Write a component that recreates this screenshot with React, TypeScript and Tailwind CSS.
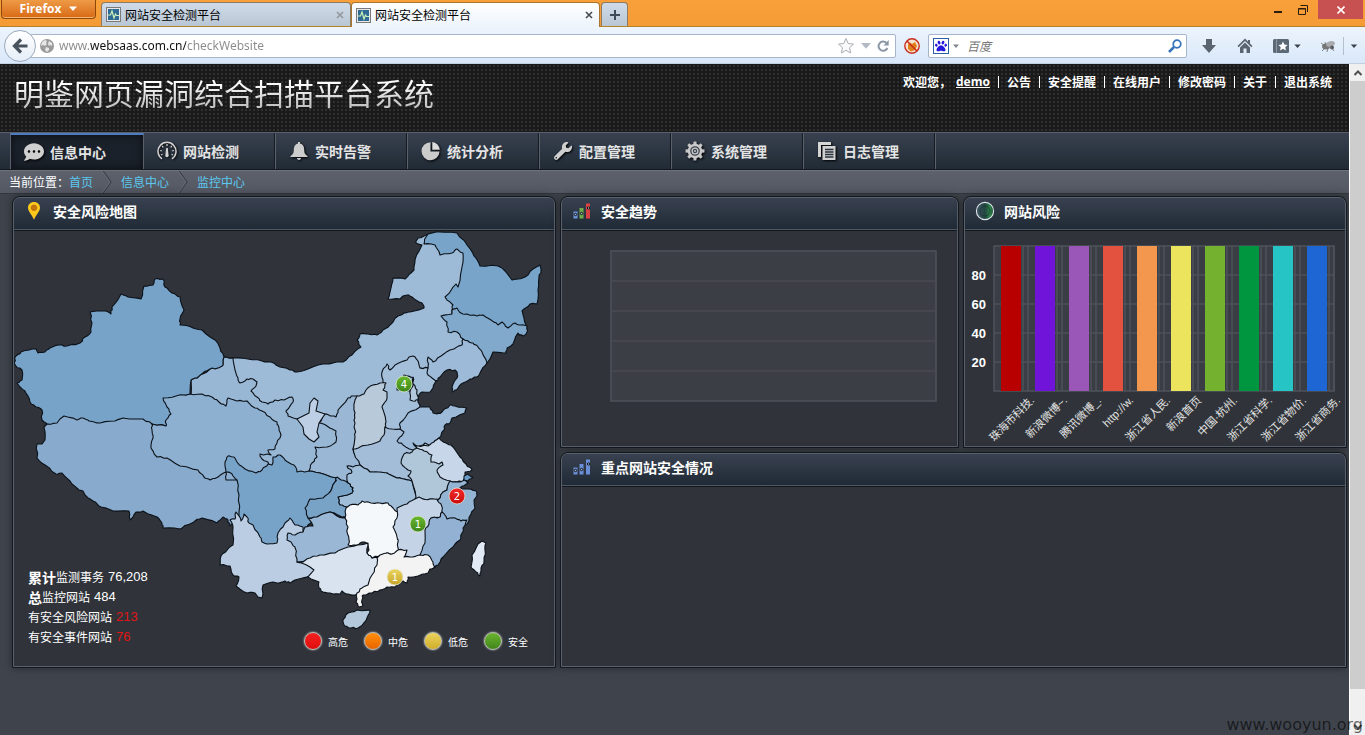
import type { ReactNode } from "react";
import { FaCommentDots, FaWrench, FaPaw, FaHome } from "react-icons/fa";

type Point = [number, number];
type Province = { name: string; fill: string; outline: string };

/* Later provinces are painted over earlier ones, so each shared border is set by the later shape. */
const provinces: Province[] = [
  { name: "内蒙古", fill: "#9dbbd7", outline: "224,357 233,358 248,359 262,361 271,362 280,367 290,370 297,372 308,369 323,364 343,362 352,355 361,347 357,340 360,334 368,334 377,335 383,330 390,325 398,316 404,313 410,312 424,308 422,303 412,297 407,295 403,296 400,299 388,299 391,288 393,278 405,279 411,273 414,270 415,260 422,245 416,243 418,238 426,235 440,240 463,250 470,270 470,300 470,345 450,352 440,365 430,380 400,380 387,400 366,400 345,418 330,430 300,430 285,418 262,408 240,400" },
  { name: "甘肃", fill: "#98b7d4", outline: "224,357 233,358 235,370 238,378 240,383 247,379 253,379 257,382 256,386 251,391 257,397 262,402 268,404 275,400 284,400 292,397 293,402 286,411 288,416 297,419 320,420 340,428 340,450 325,475 290,480 262,476 250,440 190,405 191,380 197,378 210,369 223,365" },
  { name: "新疆", fill: "#78a3c8", outline: "14,363 16,356 21,352 32,349 36,349 38,353 45,352 50,348 59,345 67,346 80,343 85,337 91,332 92,323 90,312 105,311 111,314 112,307 121,294 128,297 141,299 144,286 153,285 155,279 163,279 165,287 172,293 180,297 184,310 180,319 180,325 191,327 202,330 215,340 220,348 224,357 223,365 218,368 210,369 203,373 197,378 191,380 190,394 180,405 171,430 47,432 47,424 42,420 42,410 36,407 30,402 26,393 20,387 17,383 22,380 22,370 16,366" },
  { name: "西藏", fill: "#88abcd", outline: "47,424 57,423 60,419 64,416 77,420 83,418 89,421 100,423 115,421 123,418 143,419 152,424 166,426 210,455 232,466 240,480 241,512 230,526 228,520 223,517 217,523 202,518 195,521 187,525 180,529 163,528 162,523 157,517 143,511 136,512 130,520 129,511 113,511 101,507 93,501 85,495 83,491 78,489 70,481 62,473 56,474 45,465 37,458 37,444 42,444 45,440 44,427" },
  { name: "青海", fill: "#8dafd0", outline: "163,398 176,396 190,394 202,394 212,397 219,402 226,406 228,398 237,401 247,401 255,408 262,411 270,417 277,422 279,428 281,435 277,443 275,449 268,450 271,455 260,454 262,459 268,462 269,465 275,478 226,480 226,472 218,477 210,480 204,477 198,470 180,466 167,458 157,457 151,448 153,438 152,430 152,424 166,426 166,420 171,414 167,407" },
  { name: "黑龙江", fill: "#78a4c9", outline: "426,237 428,234 440,232 457,233 467,245 474,256 480,266 498,266 505,271 512,280 525,277 533,269 540,265 541,270 539,277 538,290 537,304 530,304 522,311 524,318 526,325 520,335 460,325 452,314 452,310 453,305 445,297 456,284 458,287 462,267 463,253 457,249 452,253 440,255 435,245 424,244" },
  { name: "吉林", fill: "#80a9cb", outline: "452,314 452,310 457,308 461,313 467,314 477,316 483,315 491,320 498,325 502,322 508,328 515,323 521,325 527,326 527,332 523,336 518,333 513,344 507,348 506,353 493,352 487,363 480,368 463,345 463,339 457,332 448,332 447,322 441,316" },
  { name: "辽宁", fill: "#9dbad8", outline: "463,339 468,341 473,343 478,347 482,352 487,363 481,371 477,377 470,379 463,383 458,388 453,392 452,387 457,378 457,372 455,370 447,370 440,377 436,381 420,378 420,368 428,368 428,357 433,362 441,356 450,350 462,345" },
  { name: "河北", fill: "#a4bfda", outline: "387,364 390,370 395,365 407,360 409,357 413,356 418,361 420,368 428,368 427,373 432,378 436,381 433,388 430,392 422,392 418,397 418,402 420,407 420,420 400,435 385,435 380,410 383,380 382,372" },
  { name: "陕西", fill: "#9ab8d5", outline: "357,396 353,396 348,398 338,410 336,417 331,416 325,414 319,423 327,426 336,431 336,442 327,447 315,447 317,457 312,463 309,471 320,473 337,478 348,483 370,480 370,400" },
  { name: "山西", fill: "#b8c9d9", outline: "380,383 373,385 366,390 364,394 357,396 355,400 354,407 355,413 354,420 355,430 355,437 353,449 354,453 384,453 385,427 386,422 382,407 385,402 387,397 387,392 383,390 386,383" },
  { name: "天津", fill: "#b2c8dd", outline: "413,377 413,384 417,390 418,400 413,401 410,400 410,390" },
  { name: "北京", fill: "#96b6d4", outline: "404,375 413,378 413,385 410,391 397,390 399,381" },
  { name: "河南", fill: "#a3bdd8", outline: "353,449 360,447 368,445 380,441 384,435 385,427 392,429 405,430 415,440 425,460 418,481 412,481 404,479 397,478 387,473 378,473 370,472 360,465 354,453" },
  { name: "山东", fill: "#9dbbd8", outline: "420,407 430,407 433,413 437,414 442,412 450,405 455,406 467,408 465,413 452,418 450,423 445,425 444,430 439,438 434,442 433,447 413,450 403,445 397,441 404,432 400,429 400,423 408,413" },
  { name: "湖北", fill: "#a0bed8", outline: "347,466 353,467 360,465 370,472 387,473 397,478 404,479 412,481 418,500 397,515 347,515 340,505 338,497 352,493 353,488 348,483 347,475 352,472" },
  { name: "安徽", fill: "#b0c6d9", outline: "417,448 425,443 450,455 455,482 450,482 447,490 443,492 438,500 430,499 423,499 415,499 416,497 412,481 408,476 411,471 408,470 401,463 404,454 412,452" },
  { name: "江苏", fill: "#c7d6e8", outline: "413,443 418,446 428,446 434,442 439,438 446,443 453,447 460,457 466,464 472,470 465,472 465,476 464,481 457,482 450,481 440,477 437,470 443,465 442,462 439,464 431,462 432,455 424,451 417,448 414,445" },
  { name: "浙江", fill: "#94b4d3", outline: "450,481 457,482 465,480 468,483 465,485 460,488 468,489 476,491 477,496 474,500 475,508 471,514 467,524 440,525 435,505 438,500 443,492 447,490" },
  { name: "上海", fill: "#6c9dc7", outline: "464,476 468,474 473,477 468,481 464,480" },
  { name: "四川", fill: "#78a3c8", outline: "226,472 225,462 228,456 234,457 237,462 245,469 256,473 262,470 268,464 272,465 273,457 280,455 285,460 294,465 297,472 309,471 320,473 337,478 335,482 330,492 325,510 308,525 303,535 278,550 240,535 239,512 239,495 237,480 232,474" },
  { name: "重庆", fill: "#79a3c6", outline: "337,477 341,480 348,483 353,488 352,493 338,497 340,505 347,507 346,518 340,516 330,512 317,517 308,518 305,508 310,499 323,498 330,492 335,482" },
  { name: "云南", fill: "#bacde3", outline: "230,520 235,519 236,512 239,516 241,521 244,514 247,517 249,523 253,525 260,537 262,542 267,544 277,543 278,533 285,523 290,518 295,525 303,527 303,532 310,560 320,572 313,575 295,580 290,583 285,581 277,583 273,582 263,585 262,598 258,597 255,593 247,593 236,586 239,577 233,575 230,566 220,565 221,556 228,549 233,545 233,527" },
  { name: "贵州", fill: "#9ab8d6", outline: "317,517 330,512 333,513 337,516 346,518 350,527 350,547 320,562 297,562 296,553 295,547 291,542 287,540 288,533 295,535 303,532 305,527 313,526 308,518" },
  { name: "广西", fill: "#d8e3ef", outline: "297,562 303,562 310,558 320,555 335,553 348,547 357,545 368,543 367,553 372,558 380,558 380,575 366,593 355,595 348,594 342,591 340,594 330,593 323,592 319,588 319,582 308,577 314,570 310,567" },
  { name: "湖南", fill: "#f4f8fb", outline: "346,508 350,505 358,505 362,501 371,503 380,503 388,503 393,508 398,512 405,535 400,555 387,553 382,555 372,558 367,553 369,550 368,543 362,542 357,545 348,545 349,540 347,532 348,527 345,518" },
  { name: "江西", fill: "#c4d3e5", outline: "397,508 407,504 415,499 419,497 423,499 430,499 437,499 441,504 442,510 440,518 431,518 440,530 430,560 404,560 398,548 398,542 397,537 393,527 397,518" },
  { name: "福建", fill: "#93b2d3", outline: "442,512 447,519 455,518 461,521 467,520 463,528 462,533 460,540 453,547 443,557 438,565 433,568 420,557 420,555 425,543 425,530 429,524 431,518 440,517" },
  { name: "广东", fill: "#f3f3f3", outline: "377,558 380,555 387,553 392,554 398,550 407,550 404,557 413,557 420,555 428,555 433,562 435,567 430,569 428,573 418,576 408,577 407,583 402,581 395,587 387,587 380,590 372,593 363,595 362,600 363,606 359,607 356,602 357,593 362,588 368,585 372,575 377,565" },
  { name: "海南", fill: "#b3c8da", outline: "348,613 357,610 370,610 367,618 363,624 358,628 351,628 345,626 343,620" },
  { name: "台湾", fill: "#e1e9f5", outline: "478,544 482,541 486,543 485,550 484,562 481,568 480,576 476,572 471,567 472,555" },
];

/* Breaks each long edge in three; the shift depends only on the place, so neighbours agree. */
function coast(outline: string): string {
  const pts = outline.split(" ").map((p) => p.split(",").map(Number) as Point);
  const out: string[] = [];
  pts.forEach(([x, y], i) => {
    const [nx, ny] = pts[(i + 1) % pts.length];
    out.push(`${x},${y}`);
    if (Math.hypot(nx - x, ny - y) > 5) {
      for (const t of [1, 2]) {
        const mx = x + ((nx - x) * t) / 3;
        const my = y + ((ny - y) * t) / 3;
        const h = Math.sin(Math.round(mx * 7) * 12.9 + Math.round(my * 7) * 78.2) * 437.5;
        const a = (h - Math.floor(h)) * Math.PI * 2;
        out.push(`${(mx + Math.cos(a) * 0.7).toFixed(1)},${(my + Math.sin(a) * 0.7).toFixed(1)}`);
      }
    }
  });
  return out.join(" ");
}

const markers = [
  { x: 404, y: 384, n: 4, fill: "url(#safe)" },
  { x: 457, y: 496, n: 2, fill: "url(#high)" },
  { x: 418, y: 524, n: 1, fill: "url(#safe)" },
  { x: 395, y: 577, n: 1, fill: "url(#low)" },
];

const legend = [
  { label: "高危", tone: "bg-linear-to-b from-[#f52020] to-[#e00d0d]" },
  { label: "中危", tone: "bg-linear-to-b from-[#ff8f0a] to-[#e86400]" },
  { label: "低危", tone: "bg-linear-to-b from-[#ecd35a] to-[#cfae28]" },
  { label: "安全", tone: "bg-linear-to-b from-[#6cb52f] to-[#3f861b]" },
];

const bars = [
  { label: "珠海市科技.", end: 1035, fill: "#b90000" },
  { label: "新浪微博~.", end: 1068, fill: "#7114d9" },
  { label: "腾讯微博_.", end: 1102, fill: "#9a57b8" },
  { label: "http://w.", end: 1134, fill: "#e3523f" },
  { label: "浙江省人民.", end: 1171, fill: "#f3974f" },
  { label: "新浪首页", end: 1202, fill: "#ece45c" },
  { label: "中国·杭州.", end: 1238, fill: "#73b12f" },
  { label: "浙江省科学.", end: 1273, fill: "#009640" },
  { label: "浙江省物价.", end: 1307, fill: "#27c4c5" },
  { label: "浙江省商务.", end: 1341, fill: "#1e66d3" },
];

function Caret({ className }: { className: string }) {
  return (
    <svg viewBox="0 0 8 5" className={className} aria-hidden="true">
      <path d="M0 .5h8L4 5z" fill="currentColor" />
    </svg>
  );
}

function PulseIcon() {
  return (
    <svg viewBox="0 0 15 15" className="size-[15px] shrink-0" aria-hidden="true">
      <rect x=".5" y=".5" width="14" height="14" fill="#e8e8e8" stroke="#7a7a7a" />
      <rect x="2" y="2" width="11" height="11" fill="#2e6a93" />
      <path d="M2 8h2.500l1.500-4 2 7 1.500-4 1 1.500H13" fill="none" stroke="#c8f0b8" strokeWidth="1.200" />
    </svg>
  );
}

function BrowserTab({ active }: { active?: boolean }) {
  return (
    <div
      className={
        active
          ? "relative z-10 -mb-px flex h-[25px] w-[249px] items-center rounded-t-sm border-x border-t border-[#a9762f] bg-linear-to-b from-white to-[#edf4fc] px-1"
          : "flex h-6 w-[250px] items-center rounded-t-sm border-x border-t border-[#8c7a62] bg-linear-to-b from-[#cfdbe8] to-[#b9c6d4] px-1"
      }
    >
      <PulseIcon />
      <span className="ml-1 flex-1 text-black">网站安全检测平台</span>
      <button aria-label="关闭标签页" className={active ? "mr-0.5 text-[#4b4f55]" : "mr-0.5 text-[#93989f]"}>
        <svg viewBox="0 0 8 8" className="size-2" aria-hidden="true">
          <path d="M1 1l6 6M7 1L1 7" stroke="currentColor" strokeWidth="1.700" />
        </svg>
      </button>
    </div>
  );
}

function BrowserChrome() {
  return (
    <div className="shrink-0 text-xs">
      <div className="flex h-[26px] items-end bg-linear-to-b from-[#f9a03a] to-[#f49b35] pl-px">
        <button className="mr-[5px] flex h-[19px] w-[95px] items-center justify-center gap-2 self-start rounded-b-sm border border-t-0 border-[#8f4709] bg-linear-to-b from-[#ee9a45] to-[#d8690f] pb-px font-['Open_Sans',sans-serif] font-bold text-white shadow-[inset_0_-1px_0_#f3b878]">
          Firefox
          <Caret className="h-[5px] w-2" />
        </button>
        <BrowserTab />
        <BrowserTab active />
        <button aria-label="新建标签页" className="ml-px flex h-6 w-[27px] items-center justify-center rounded-t-sm border-x border-t border-[#8c7a62] bg-linear-to-b from-[#cfdbe8] to-[#b9c6d4]">
          <svg viewBox="0 0 10 10" className="size-2.5" aria-hidden="true">
            <path d="M5 0v10M0 5h10" stroke="#3c4a59" strokeWidth="2" />
          </svg>
        </button>
        <div className="ml-auto flex h-[19px] items-center self-start pr-0.5">
          <button aria-label="最小化" className="flex h-full w-6 items-end justify-center pb-1.5">
            <span className="h-0.5 w-2 bg-[#2b1c0b]" />
          </button>
          <button aria-label="还原" className="mr-0.5 flex w-[26px] justify-center">
            <svg viewBox="0 0 10 10" className="size-2.5" aria-hidden="true">
              <path d="M.5 3.500h7v6h-7zM.5 4h7M2.500 .5h7v6.500" fill="none" stroke="#2b1c0b" />
            </svg>
          </button>
          <button aria-label="关闭" className="flex h-full w-[45px] items-center justify-center bg-[#c75050]">
            <svg viewBox="0 0 8 8" className="size-2" aria-hidden="true">
              <path d="M.5 .5l7 7M7.500 .5l-7 7" stroke="#fff" strokeWidth="1.600" />
            </svg>
          </button>
        </div>
      </div>

      <div className="flex h-[38px] items-center border-t border-b border-t-[#b4812f] border-b-[#c2cfdf] bg-linear-to-b from-[#edf4fc] to-[#d9e8fa] pt-px pr-[7px] pl-1">
        <button aria-label="后退" className="z-10 flex size-8 shrink-0 items-center justify-center rounded-full border border-[#9aa9bb] bg-linear-to-b from-white to-[#e6eef8]">
          <svg viewBox="0 0 16 16" className="size-4" aria-hidden="true">
            <path d="M9 1.500L2.500 8 9 14.500M3 8h12.500" fill="none" stroke="#48525f" strokeWidth="3.200" />
          </svg>
        </button>
        <div className="-ml-1.5 flex h-6 flex-1 items-center rounded-xs border border-[#a6b5cb] bg-white pr-1.5 pl-[9px]">
          <svg viewBox="0 0 14 14" className="size-3.5 shrink-0" aria-hidden="true">
            <circle cx="7" cy="7" r="7" fill="#9a9a9a" />
            <path d="M2 3l3-2 2 1-1 2 1 1-2 2-2-1-2 1zM9 2l3 2v3l-2-1-1 1-1-2zM6 8l3 1v2l-2 2-2-2z" fill="#e6e6e6" />
          </svg>
          <input
            aria-label="地址栏"
            defaultValue="www.websaas.com.cn/checkWebsite"
            className="ml-[5px] min-w-0 flex-1 bg-[linear-gradient(90deg,#8a8a8a_31px,#111_31px,#111_127px,#8a8a8a_127px)] bg-clip-text font-['Noto_Sans',sans-serif] text-xs text-transparent caret-black outline-none"
          />
          <button aria-label="收藏" className="mr-1.5">
            <svg viewBox="0 0 18 18" className="size-[18px]" aria-hidden="true">
              <path d="M9 1.500l2.200 5 5.300.6-4 3.600 1.200 5.300L9 13.300 4.300 16l1.200-5.300-4-3.600 5.300-.6z" fill="#fafafa" stroke="#a9adb3" />
            </svg>
          </button>
          <button aria-label="历史记录" className="mr-1.5 text-[#b3bac5]">
            <Caret className="h-[7px] w-2.5" />
          </button>
          <button aria-label="重新载入">
            <svg viewBox="0 0 12 12" className="size-3" aria-hidden="true">
              <path d="M9.500 3A4.600 4.600 0 1 0 10.400 8" fill="none" stroke="#8c97a5" strokeWidth="2" />
              <path d="M11.700 0v5.500H6.500z" fill="#8c97a5" />
            </svg>
          </button>
        </div>
        <button aria-label="拦截" className="mx-2">
          <svg viewBox="0 0 16 16" className="size-4" aria-hidden="true">
            <circle cx="8" cy="8" r="7.200" fill="#f6e2cf" stroke="#c92c1e" strokeWidth="1.400" />
            <path d="M4 6.500l2-2 2 1.500 3-2 2 4-2 4-4 1.500L4 11z" fill="#df7f17" />
            <path d="M3 3l10 10" stroke="#c92c1e" strokeWidth="1.500" />
          </svg>
        </button>
        <div className="flex h-6 w-[259px] items-center rounded-xs border border-[#a6b5cb] bg-white pr-1 pl-1">
          <span className="flex size-4 items-center justify-center border border-[#2b5fa8] bg-white text-[#2319dc]">
            <FaPaw className="size-3" />
          </span>
          <button aria-label="搜索引擎" className="ml-1 text-[#80858d]">
            <Caret className="h-1 w-1.5" />
          </button>
          <input aria-label="搜索" placeholder="百度" className="ml-2 min-w-0 flex-1 italic outline-none placeholder:text-[#777]" />
          <button aria-label="开始搜索">
            <svg viewBox="0 0 14 14" className="size-3.5" aria-hidden="true">
              <circle cx="9" cy="5" r="3.800" fill="none" stroke="#3572b8" strokeWidth="1.700" />
              <path d="M6 8L1 13" stroke="#3572b8" strokeWidth="2.500" />
            </svg>
          </button>
        </div>
        <button aria-label="下载" className="ml-3.5">
          <svg viewBox="0 0 16 16" className="size-4" aria-hidden="true">
            <path d="M5 1h6v6h4l-7 8-7-8h4z" fill="#5a6470" />
          </svg>
        </button>
        <button aria-label="主页" className="ml-5 text-[#5a6470]">
          <svg viewBox="0 0 16 16" className="size-4" aria-hidden="true">
            <path d="M8 .5L.5 8l1.200 1.200L8 3l6.300 6.200L15.500 8 13 5.500V2h-2v1.500z" fill="currentColor" />
            <path d="M8 4.500L3 9.500V15h3.500v-4.500h3V15H13V9.500z" fill="currentColor" />
          </svg>
        </button>
        <button aria-label="书签" className="ml-5 flex items-center gap-[5px] text-[#3b434d]">
          <svg viewBox="0 0 16 14" className="h-3.5 w-4" aria-hidden="true">
            <rect width="16" height="14" rx="1.500" fill="#5d6875" />
            <path d="M3.500 0v14" stroke="#8d97a3" />
            <path d="M10 2.500l1.400 3 3.200.4-2.300 2.200.6 3.300-2.900-1.600-2.900 1.600.6-3.300-2.300-2.200 3.200-.4z" fill="#fff" />
          </svg>
          <Caret className="h-1 w-[7px]" />
        </button>
        <button aria-label="附加组件" className="ml-[19px]">
          <svg viewBox="0 0 16 14" className="h-3.5 w-4" aria-hidden="true">
            <ellipse cx="6" cy="7.500" rx="4" ry="3" fill="#77787a" />
            <ellipse cx="10.500" cy="5" rx="4.500" ry="2.600" fill="#a9abae" transform="rotate(-15 10 5)" />
            <circle cx="12" cy="8.500" r="2" fill="#55575a" />
            <path d="M1 4l4 3M2 12l3-3M7 13l1-4M14 12l-3-4M5 3l1 3" stroke="#6b6c6e" strokeWidth=".8" />
          </svg>
        </button>
        <span className="ml-[7px] h-[18px] w-px bg-[#b2bfce]" />
        <button aria-label="更多" className="ml-1.5 text-[#3b434d]">
          <Caret className="h-1 w-2" />
        </button>
      </div>
    </div>
  );
}

function GaugeIcon() {
  return (
    <svg viewBox="0 0 20 20" className="size-5" aria-hidden="true">
      <path d="M5 17.800A9 9 0 1 1 15 17.800" fill="none" stroke="#d2d2d2" strokeWidth="1.500" />
      <path d="M10 3v2M5.200 5l1.100 1.300M14.800 5l-1.100 1.300M3.200 9.500l1.600.4M16.800 9.500l-1.600.4M4 14l1.500-.7M16 14l-1.500-.7" stroke="#d2d2d2" strokeWidth="1.200" />
      <path d="M9.200 7h1.600l.9 7.500a1.700 1.700 0 1 1-3.400 0z" fill="#d2d2d2" />
    </svg>
  );
}

function BellIcon() {
  return (
    <svg viewBox="0 0 20 20" className="size-5" aria-hidden="true">
      <path d="M9 1h2v1.500c3 .7 4.200 3 4.200 6 0 4 1 5 3.300 6.500V16H1.500v-1C3.800 13.500 4.800 12.500 4.800 8.500c0-3 1.200-5.300 4.200-6zM8 17h4c-.2 1.300-1 2-2 2s-1.800-.7-2-2z" fill="#cdcdcd" />
    </svg>
  );
}

function PieIcon() {
  return (
    <svg viewBox="0 0 20 20" className="size-5" aria-hidden="true">
      <path d="M9.500 1.200A9 9 0 1 0 18.500 10.500H9.500z" fill="#cbcbcb" />
      <path d="M11.300 1a8.500 8.500 0 0 1 7.500 7.700h-7.500z" fill="#dcdcdc" />
    </svg>
  );
}

function GearIcon() {
  return (
    <svg viewBox="0 0 20 20" className="size-5" aria-hidden="true">
      <g fill="#c6c6c6">
        {[0, 45, 90, 135].map((a) => (
          <path key={a} d="M8.600 .5h2.800l1 9.500-1 9.500H8.600l-1-9.500z" transform={`rotate(${a} 10 10)`} />
        ))}
      </g>
      <circle cx="10" cy="10" r="7.300" fill="#c9c9c9" />
      <circle cx="10" cy="10" r="4.200" fill="none" stroke="#3b4450" strokeWidth="1.300" />
      <circle cx="10" cy="10" r="1.600" fill="#c9c9c9" stroke="#3b4450" strokeWidth="1.200" />
    </svg>
  );
}

function PagesIcon() {
  return (
    <svg viewBox="0 0 20 20" className="size-5" aria-hidden="true">
      <path d="M1 1h13v3H4v12H1z" fill="#d5d5d5" />
      <path d="M5.500 5h13v14h-13z" fill="#d0d0d0" />
      <path d="M8 8.500h8.500M8 11h8.500M8 13.500h8.500M8 16h8.500" stroke="#27303a" strokeWidth="1.300" />
    </svg>
  );
}

const navItems: { label: string; icon: ReactNode }[] = [
  { label: "信息中心", icon: <FaCommentDots className="size-5" /> },
  { label: "网站检测", icon: <GaugeIcon /> },
  { label: "实时告警", icon: <BellIcon /> },
  { label: "统计分析", icon: <PieIcon /> },
  { label: "配置管理", icon: <FaWrench className="size-[18px] -scale-x-100 rotate-90" /> },
  { label: "系统管理", icon: <GearIcon /> },
  { label: "日志管理", icon: <PagesIcon /> },
];

const userLinks = ["公告", "安全提醒", "在线用户", "修改密码", "关于", "退出系统"];

function SiteHeader() {
  return (
    <header>
      <div className="flex h-[68px] items-start justify-between bg-[#1a1a1a] bg-[radial-gradient(#303030_1px,transparent_1px)] bg-[size:4px_4px] pr-[17px] pl-3.5">
        <h1 className="mt-1.5 bg-linear-to-b from-white from-30% to-[#c4c4c4] to-80% bg-clip-text text-[30px] leading-[44px] text-transparent">
          明鉴网页漏洞综合扫描平台系统
        </h1>
        <div className="mt-2.5 flex items-center text-xs font-bold text-white">
          <span>欢迎您，</span>
          <a href="#demo" className="mr-2 ml-[5px] font-['Open_Sans',sans-serif] underline">demo</a>
          {userLinks.map((t) => (
            <span key={t} className="flex items-center">
              <span className="h-3 w-px bg-white" />
              <a href={`#${t}`} className={t === "退出系统" ? "pl-2" : "px-2"}>{t}</a>
            </span>
          ))}
        </div>
      </div>
      <nav className="flex h-[38px] border-t border-b border-t-[#5a606b] border-b-[#14181d] bg-linear-to-b from-[#394150] to-[#202b35] pl-2.5">
        {navItems.map((item, i) => (
          <a
            key={item.label}
            href={`#${item.label}`}
            className={
              i === 0
                ? "flex w-[134px] items-center gap-1.5 border-x border-t-2 border-x-[#5a616d] border-t-[#4f7cc0] bg-[#1b212b] pl-[13px] text-sm font-bold text-[#e4e4e4] shadow-[inset_0_0_8px_#0b0e13]"
                : "flex w-[132px] items-center gap-1.5 border-r border-[#5a616d] pl-[13px] text-sm font-bold text-[#e4e4e4] shadow-[inset_-1px_0_0_#171c23]"
            }
          >
            <span className="flex w-5 justify-center text-[#cfcfcf] drop-shadow-[1px_1px_1px_#000]">{item.icon}</span>
            <span>{item.label}</span>
          </a>
        ))}
      </nav>
      <div className="flex h-6 items-center border-t border-b border-t-[#6e727c] border-b-[#33383f] bg-linear-to-b from-[#5c616c] to-[#545863] pl-[9px] text-xs text-[#5cc8ef]">
        <span className="text-white">当前位置：</span>
        {["首页", "信息中心", "监控中心"].map((t, i) => (
          <span key={t} className="flex items-center">
            {i > 0 && (
              <svg viewBox="0 0 10 22" className="mx-[9px] h-[22px] w-2.5" aria-hidden="true">
                <path d="M1 0l8 11-8 11" fill="none" stroke="#383c45" strokeWidth="1.200" />
                <path d="M0 0l8 11-8 11" fill="none" stroke="#767a84" strokeWidth=".6" />
              </svg>
            )}
            <a href={`#${t}`}>{t}</a>
          </span>
        ))}
      </div>
    </header>
  );
}

function Panel({ title, icon, className, children }: { title: string; icon: ReactNode; className?: string; children?: ReactNode }) {
  return (
    <section className={`flex flex-col rounded-t-lg border border-[#14191f] bg-[#30343a] shadow-[0_0_8px_rgba(0,0,0,0.4)] ${className ?? ""}`}>
      <div className="flex flex-1 flex-col rounded-t-[7px] border border-[#59616d]">
        <div className="flex h-[33px] items-center rounded-t-md border-b border-[#14191f] bg-linear-to-b from-[#394150] to-[#1f2a35] pb-1.5 pl-2.5 shadow-[inset_0_-1px_0_#4d5763]">
          <span className="flex w-5 justify-center">{icon}</span>
          <h2 className="ml-[9px] text-sm font-bold text-white">{title}</h2>
        </div>
        <div className="relative flex-1">{children}</div>
      </div>
    </section>
  );
}

function PinIcon() {
  return (
    <svg viewBox="0 0 14 20" className="h-5 w-3.5" aria-hidden="true">
      <path d="M7 1C3.300 1 1 3.600 1 6.800c0 3.600 4 7 6 12 2-5 6-8.400 6-12C13 3.600 10.700 1 7 1z" fill="#fdc81c" />
      <circle cx="7" cy="6.800" r="2.800" fill="#c8760c" stroke="#a85d06" strokeWidth=".6" />
    </svg>
  );
}

function BarsIcon({ tones }: { tones: [string, string, string] }) {
  return (
    <svg viewBox="0 0 18 18" className="size-[18px]" aria-hidden="true">
      <rect x=".5" y="9.500" width="4" height="7" fill={tones[0]} />
      <rect x="6.500" y="6" width="4" height="10.500" fill={tones[1]} />
      <rect x="13" y="1.500" width="4" height="15" fill={tones[2]} />
      <g fill="#aab4c6" stroke="#0c1016" strokeWidth="1">
        <circle cx="2.500" cy="12.500" r="1.200" />
        <circle cx="8.500" cy="11.500" r="1.200" />
        <circle cx="15.500" cy="6" r="1.200" />
      </g>
    </svg>
  );
}

function RadarIcon() {
  return (
    <svg viewBox="0 0 20 20" className="size-5" aria-hidden="true">
      <defs>
        <linearGradient id="radar">
          <stop offset="0" stopColor="#43576b" />
          <stop offset=".5" stopColor="#22463f" />
          <stop offset=".8" stopColor="#2e8449" />
          <stop offset="1" stopColor="#1f4a35" />
        </linearGradient>
      </defs>
      <circle cx="10" cy="10" r="8.600" fill="url(#radar)" stroke="#dfe5e8" strokeWidth="1.100" />
      <circle cx="10" cy="10" r="5" fill="none" stroke="#12251f" opacity=".5" />
    </svg>
  );
}

function RiskMap() {
  return (
    <>
      <svg viewBox="14 231 540 435" className="block w-full" role="img" aria-label="安全风险地图">
        <defs>
          <linearGradient id="safe" x2="0" y2="1"><stop stopColor="#6cb82f" /><stop offset="1" stopColor="#3d861a" /></linearGradient>
          <linearGradient id="high" x2="0" y2="1"><stop stopColor="#f62a2a" /><stop offset="1" stopColor="#c80c0c" /></linearGradient>
          <linearGradient id="low" x2="0" y2="1"><stop stopColor="#ecd560" /><stop offset="1" stopColor="#c6a528" /></linearGradient>
        </defs>
        <g stroke="#0b1118" strokeWidth="1.100" strokeLinejoin="round">
          {provinces.map((p) => (
            <polygon key={p.name} points={coast(p.outline)} fill={p.fill} />
          ))}
          <polygon points="297,419 300,423 303,427 304,434 309,439 314,442 319,437 317,432 319,423 325,414 316,411 318,401 314,398 310,403 309,413" fill="#bccfe5" />
        </g>
        {markers.map((m) => (
          <g key={`${m.x}-${m.y}`}>
            <circle cx={m.x} cy={m.y} r="8" fill={m.fill} stroke="#e4ead9" strokeOpacity=".75" />
            <text x={m.x} y={m.y + 4} textAnchor="middle" fill="#fff" className="font-['DejaVu_Sans',sans-serif] text-[10px]">{m.n}</text>
          </g>
        ))}
      </svg>
      <div className="absolute bottom-[19px] left-3.5 text-xs text-white">
        <p className="flex h-5 items-center"><strong className="text-sm">累计</strong>监测事务<span className="ml-1 font-['Liberation_Sans',sans-serif] text-[13px]">76,208</span></p>
        <p className="flex h-5 items-center"><strong className="text-sm">总</strong>监控网站<span className="ml-1 font-['Liberation_Sans',sans-serif] text-[13px]">484</span></p>
        <p className="flex h-5 items-center">有安全风险网站<span className="ml-1 font-['Liberation_Sans',sans-serif] text-[13px] text-[#e01414]">213</span></p>
        <p className="flex h-5 items-center">有安全事件网站<span className="ml-1 font-['Liberation_Sans',sans-serif] text-[13px] text-[#e01414]">76</span></p>
      </div>
      <ul className="absolute right-2.5 bottom-4 flex text-[10px] text-white">
        {legend.map((l) => (
          <li key={l.label} className="flex w-[60px] items-center gap-1.5">
            <span className={`size-[18px] rounded-full border border-[#c0c1ba] shadow-[0_0_2px_#d0d0d0] ${l.tone}`} />
            {l.label}
          </li>
        ))}
      </ul>
    </>
  );
}

function TrendChart() {
  return (
    <svg viewBox="562 231 395 215" className="block w-full" role="img" aria-label="安全趋势">
      <rect x="611" y="251" width="325" height="150" fill="#3c3e46" />
      <path d="M612 281h323M612 311h323M612 341h323M612 371h323" stroke="#484a52" strokeWidth="1.500" />
      <rect x="611" y="251" width="325" height="150" fill="none" stroke="#4e525a" strokeWidth="1.500" />
    </svg>
  );
}

function RiskChart() {
  return (
    <svg viewBox="965 231 380 215" className="block w-full" role="img" aria-label="网站风险">
      <rect x="994" y="246" width="340" height="145" fill="#3b3d44" />
      <g stroke="#4e5159" strokeWidth="1.500">
        {[275, 304, 333, 362].map((y) => <path key={y} d={`M994 ${y}h340`} />)}
        {bars.map((b, i) => <path key={b.label} d={`M${1028 + i * 34} 246v145M${1023 + i * 34} 246v145`} />)}
      </g>
      <rect x="994" y="246" width="340" height="145" fill="none" stroke="#4e525a" strokeWidth="1.500" />
      {bars.map((b, i) => (
        <rect key={b.label} x={1001 + i * 34} y="246" width="20" height="145" fill={b.fill} />
      ))}
      {[80, 60, 40, 20].map((v, i) => (
        <text key={v} x="986" y={280 + i * 29} textAnchor="end" fill="#fff" className="font-['Liberation_Sans',sans-serif] text-[13px] font-bold">{v}</text>
      ))}
      <g fill="#e4e4e4" className="font-['Liberation_Sans','Noto_Sans_CJK_SC',sans-serif] text-[11px]">
        {bars.map((b) => (
          <text key={b.label} x={b.end} y="401" textAnchor="end" transform={`rotate(-45 ${b.end} 401)`}>{b.label}</text>
        ))}
      </g>
    </svg>
  );
}

function Scrollbar() {
  return (
    <div className="flex w-4 shrink-0 flex-col items-center border-l border-white bg-[#f0f0f0]" aria-hidden="true">
      <svg viewBox="0 0 16 17" className="h-[17px] w-4">
        <path d="M4.500 11L8 7.500l3.500 3.500" fill="none" stroke="#505050" strokeWidth="2" />
      </svg>
      <div className="w-full flex-[608] bg-[#cdcdcd]" />
      <div className="w-full flex-[29]" />
      <svg viewBox="0 0 16 17" className="h-[17px] w-4">
        <path d="M4.500 7L8 10.500 11.500 7" fill="none" stroke="#505050" strokeWidth="2" />
      </svg>
    </div>
  );
}

export default function App() {
  return (
    <div className="relative flex h-screen flex-col overflow-hidden font-['Noto_Sans_CJK_SC',sans-serif]">
      <BrowserChrome />
      <div className="flex min-h-0 flex-1">
        <div className="min-w-0 flex-1 overflow-hidden bg-[#3f444c]">
          <SiteHeader />
          <main className="grid grid-cols-[minmax(0,544fr)_minmax(0,399fr)_minmax(0,384fr)] grid-rows-[auto_1fr] gap-1 pt-0.5 pr-0.5 pl-3">
            <Panel title="安全风险地图" icon={<PinIcon />} className="row-span-2">
              <RiskMap />
            </Panel>
            <Panel title="安全趋势" icon={<BarsIcon tones={["#6d97dd", "#6fae4a", "#dc4141"]} />}>
              <TrendChart />
            </Panel>
            <Panel title="网站风险" icon={<RadarIcon />}>
              <RiskChart />
            </Panel>
            <Panel title="重点网站安全情况" icon={<BarsIcon tones={["#6a8fd8", "#6a8fd8", "#6a8fd8"]} />} className="col-span-2" />
          </main>
        </div>
        <Scrollbar />
      </div>
      <span className="absolute right-0.5 bottom-0 font-['DejaVu_Sans',sans-serif] text-base leading-5 text-black/60">www.wooyun.org</span>
    </div>
  );
}
